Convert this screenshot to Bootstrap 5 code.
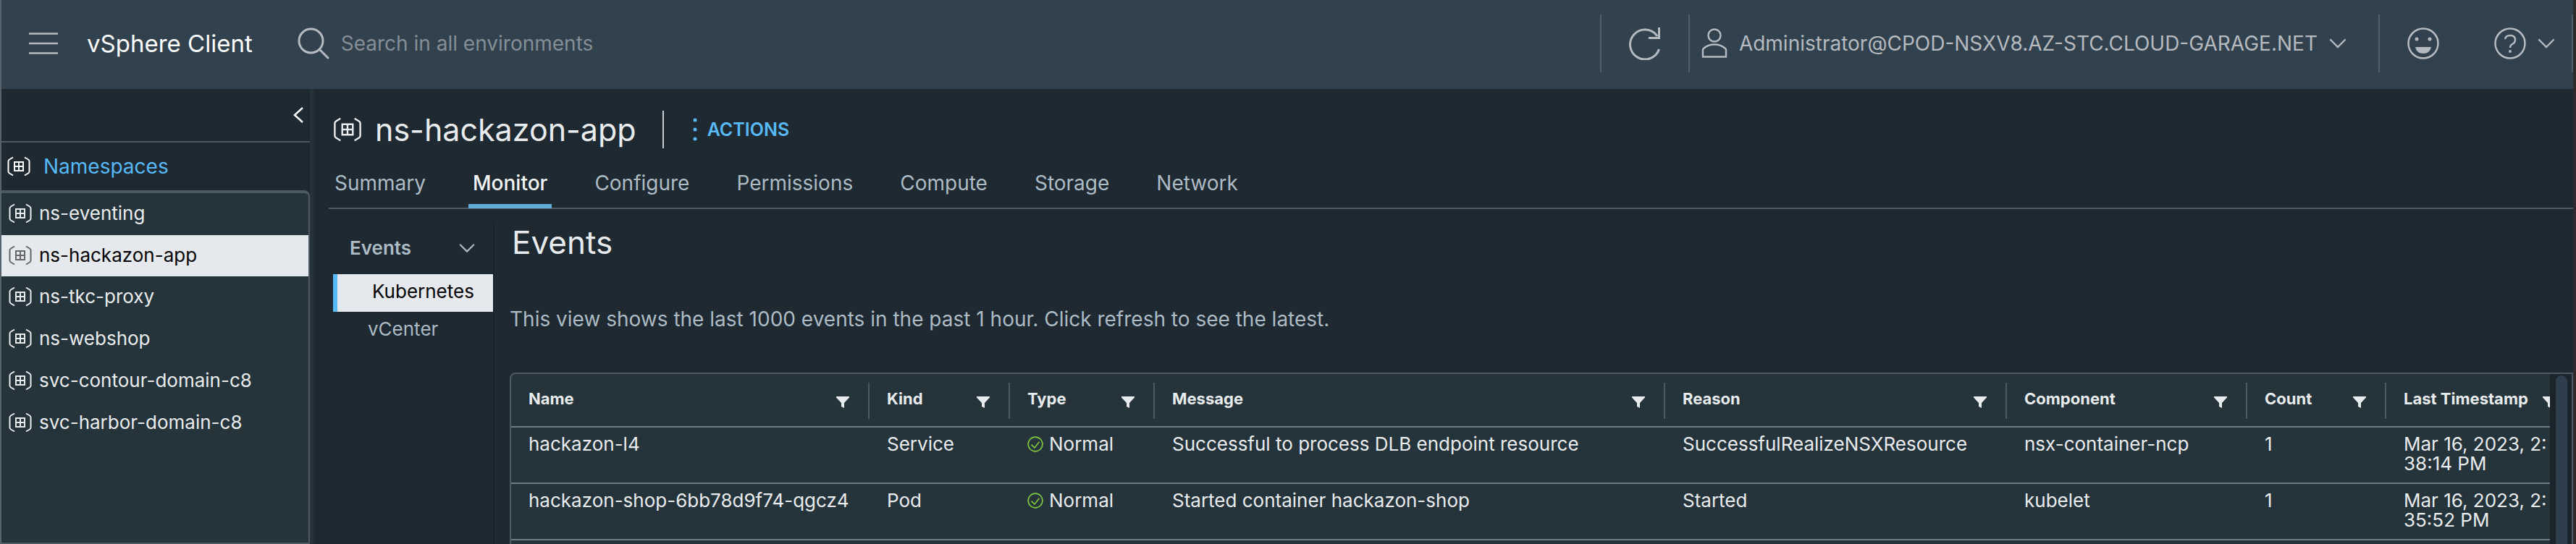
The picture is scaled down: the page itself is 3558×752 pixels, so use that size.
<!DOCTYPE html>
<html lang="en">
<head>
<meta charset="utf-8">
<meta name="viewport" content="width=device-width, initial-scale=1">
<title>vSphere Client</title>
<link href="https://cdn.jsdelivr.net/npm/bootstrap@5.3.0/dist/css/bootstrap.min.css" rel="stylesheet">
<style>
  :root { --line: #4d5965; --ink: #e9ecef; --soft: #adbbc4; --blue: #57b9f8; --panel: #25333a; --page: #1e2931; }
  body { font-family: Inter, "Liberation Sans", sans-serif; font-size: 26px; line-height: 32px; background: var(--page); color: var(--ink); }
  .shell { border-left: 2px solid #56626c; border-right: 4px solid #2f2c2e; min-height: 100vh; overflow: hidden; }
  svg { flex: none; display: block; }
  .ico { fill: none; stroke: currentColor; stroke-width: 2; }
  a { color: inherit; text-decoration: none; }
  button { background: none; border: 0; padding: 0; color: inherit; }

  .topbar { height: 123px; background: #32414e; color: #b4babf; font-size: 28px; padding: 0 0 3px 38px; flex: none; }
  .product { font-size: 33px; color: #fff; margin: 0 62px 0 40px; }
  .search-box { background: none; border: 0; padding: 0; color: inherit; width: 600px; outline: 0; }
  .search-box::placeholder { color: #848e96; opacity: 1; }
  .bar-item { height: 80px; border-left: 2px solid #4f5e6a; }
  .refresh { padding: 0 38px; }
  .user { padding-right: 44px; }
  .help { padding: 0 23px 0 38px; border-right: 2px solid #4f5e6a; }
  .help-btn { margin-left: 76px; }

  .sidebar { width: 432px; border-right: 6px solid #25323a; }
  .collapse-row { height: 74px; padding-right: 8px; border-bottom: 2px solid var(--line); }
  .root-node { height: 66px; padding-left: 8px; gap: 18px; color: var(--blue); font-size: 28px; }
  .root-node svg { color: #fff; }
  .tree { background: var(--panel); border: 2px solid var(--line); border-top-width: 4px; border-left: 0; border-radius: 0 8px 0 0; }
  .tree-node { height: 58px; padding: 0 0 2px 10px; gap: 10px; }
  .tree-node.selected { height: 57px; background: #e5e9ed; color: #000; }
  .tree-node.selected svg { color: #666; }

  .workspace { min-width: 0; }
  .title-row { padding: 30px 0 0 26px; height: 82px; }
  .object-title { font-size: 43px; line-height: 50px; padding-left: 18px; }
  .title-rule { width: 2px; height: 52px; background: #c8cdd1; margin: 0 40px 0 36px; }
  .actions { color: var(--blue); font-size: 25px; font-weight: 600; gap: 14px; }
  .tabs { font-size: 28px; border-bottom: 2px solid var(--line); margin: 18px 0 0 20px; gap: 53px; padding-left: 2px; }
  .tabs a { color: var(--soft); padding: 14px 6px 13px; border-bottom: 6px solid transparent; margin-bottom: -1px; }
  .tabs a.current { color: #f2f4f5; border-color: #62aad8; font-weight: 500; }

  .content-row { padding: 18px 0 0 26px; }
  .subnav { width: 223px; border-right: 2px solid #19232a; }
  .subnav-head { font-weight: 600; color: var(--soft); height: 72px; padding: 0 25px 0 23px; }
  .subnav a { display: block; color: var(--soft); padding: 8px 0 12px 48px; height: 52px; }
  .subnav a.current { background: #e5e9ed; color: #000; border-left: 6px solid var(--blue); }

  .view { padding-left: 21px; min-width: 0; }
  .view-title { font-size: 44px; line-height: 50px; padding: 3px 0 0 3px; }
  .view-note { font-size: 28px; color: var(--soft); padding: 65px 0 58px; }
  .datagrid { background: var(--panel); border: 2px solid var(--line); border-bottom: 0; border-radius: 8px 0 0 0; height: 237px; }
  .grid-clip { overflow: hidden; min-width: 0; }
  .grid-table { width: calc(100% + 34px); table-layout: fixed; border-collapse: separate; border-spacing: 0; line-height: 27px; }
  .grid-table th { padding: 12px 0 10px; border-bottom: 2px solid #6c7b84; font-size: 22px; font-weight: 700; }
  .head-cell { height: 50px; border-right: 2px solid #4b5862; padding: 0 26px 6px 24px; }
  th:last-child .head-cell { border-right: 0; }
  .head-cell button { padding-top: 10px; }
  .grid-table td { height: 78px; padding: 9px 0 0 24px; border-bottom: 2px solid #6c7b84; vertical-align: top; white-space: nowrap; }
  .ok { color: #7fc53f; }
  .gutter { width: 30px; background: #1b242b; padding: 2px 6px 0 8px; }
  .thumb { background: #2e3e4d; border-radius: 8px 8px 0 0; height: 100%; width: 16px; }
</style>
<script src="https://cdn.jsdelivr.net/npm/bootstrap@5.3.0/dist/js/bootstrap.bundle.min.js"></script>
</head>
<body>
<svg width="0" height="0" class="position-absolute" aria-hidden="true">
  <symbol id="ns" viewBox="0 0 32 28">
    <path d="M8 1.500 3 4.500Q1.500 5.500 1.500 7v14q0 1.500 1.500 2.500l5 3M24 1.500l5 3q1.500 1 1.500 2.500v14q0 1.500-1.500 2.500l-5 3M10 8h12v12H10zM16 8v12M10 14h12" fill="none" stroke="currentColor" stroke-width="2"/>
  </symbol>
  <symbol id="down" viewBox="0 0 24 14"><path d="M2 2l10 10L22 2" fill="none" stroke="currentColor" stroke-width="2.400" stroke-linecap="round"/></symbol>
  <symbol id="filter" viewBox="0 0 18 16"><path d="M0 0h18v1.500L11 9v7l-4-2V9L0 1.500z" fill="currentColor"/></symbol>
  <symbol id="check" viewBox="0 0 20 20"><path d="M1 10a9 9 0 1 0 18 0a9 9 0 1 0-18 0M5 10.500l4 4 6-7.500" fill="none" stroke="currentColor" stroke-width="1.500"/></symbol>
</svg>

<div class="shell d-flex flex-column">
  <header class="topbar d-flex align-items-center">
    <button type="button" aria-label="Menu"><svg class="ico" width="40" height="30"><path d="M0 1.500h40M0 15h40M0 28.500h40" stroke-width="2.500"/></svg></button>
    <a href="#" class="product text-nowrap">vSphere Client</a>
    <label for="search" class="me-3" aria-label="Search"><svg class="ico" width="44" height="44" stroke-linecap="round"><circle cx="18.500" cy="18.500" r="16.500" stroke-width="3"/><path d="M31 31l11 11" stroke-width="3"/></svg></label>
    <input id="search" class="search-box" type="text" placeholder="Search in all environments">
    <div class="d-flex align-items-center ms-auto">
      <div class="bar-item refresh d-flex align-items-center"><button type="button" aria-label="Refresh"><svg class="ico" width="44" height="46"><path d="M41.500 31A20.500 20.500 0 1 1 39 13" stroke-width="3"/><path d="M41.500 1v14.500H27" stroke-width="3"/></svg></button></div>
      <div class="bar-item user d-flex align-items-center">
        <button type="button" class="d-flex align-items-center text-nowrap">
          <svg class="ico mx-3" width="36" height="42"><circle cx="18" cy="10" r="8.500" stroke-width="2.500"/><path d="M2 39.500V30q0-1 1-2 6-5.500 15-5.500T33 28q1 1 1 2v9.500z" stroke-width="2.500"/></svg>
          Administrator@CPOD-NSXV8.AZ-STC.CLOUD-GARAGE.NET
          <svg class="ms-3" width="24" height="14"><use href="#down"/></svg>
        </button>
      </div>
      <div class="bar-item help d-flex align-items-center">
        <button type="button" aria-label="Feedback"><svg class="ico" width="44" height="44"><circle cx="22" cy="22" r="20.500" stroke-width="2.500"/><circle cx="13" cy="16" r="2.500" fill="currentColor" stroke="none"/><circle cx="31" cy="16" r="2.500" fill="currentColor" stroke="none"/><path d="M11 27h22q-2 9-11 9t-11-9z" fill="currentColor" stroke="none"/></svg></button>
        <button type="button" class="help-btn d-flex align-items-center" aria-label="Help"><svg class="ico" width="44" height="44"><circle cx="22" cy="22" r="20.500" stroke-width="2.500"/><path d="M15 16q1-5 7-5 7 0 7 6 0 4-4 6-3 1.500-3 5" stroke-width="2.500"/><circle cx="22" cy="33" r="2" fill="currentColor" stroke="none"/></svg><svg class="ms-3" width="24" height="14"><use href="#down"/></svg></button>
      </div>
    </div>
  </header>

  <div class="d-flex flex-grow-1">
    <aside class="sidebar flex-shrink-0 d-flex flex-column">
      <div class="collapse-row d-flex justify-content-end align-items-center"><button type="button" aria-label="Collapse"><svg class="ico" width="16" height="24"><path d="M14 2L3 12l11 10" stroke="#fff" stroke-width="2.500"/></svg></button></div>
      <a href="#" class="root-node d-flex align-items-center"><svg width="32" height="28"><use href="#ns"/></svg>Namespaces</a>
      <nav class="tree flex-grow-1">
        <a href="#" class="tree-node d-flex align-items-center"><svg width="32" height="28"><use href="#ns"/></svg>ns-eventing</a>
        <a href="#" class="tree-node selected d-flex align-items-center"><svg width="32" height="28"><use href="#ns"/></svg>ns-hackazon-app</a>
        <a href="#" class="tree-node d-flex align-items-center"><svg width="32" height="28"><use href="#ns"/></svg>ns-tkc-proxy</a>
        <a href="#" class="tree-node d-flex align-items-center"><svg width="32" height="28"><use href="#ns"/></svg>ns-webshop</a>
        <a href="#" class="tree-node d-flex align-items-center"><svg width="32" height="28"><use href="#ns"/></svg>svc-contour-domain-c8</a>
        <a href="#" class="tree-node d-flex align-items-center"><svg width="32" height="28"><use href="#ns"/></svg>svc-harbor-domain-c8</a>
      </nav>
    </aside>

    <main class="workspace flex-grow-1 d-flex flex-column">
      <div class="title-row d-flex align-items-center">
        <svg width="40" height="34"><use href="#ns"/></svg>
        <h1 class="object-title fw-normal m-0">ns-hackazon-app</h1>
        <span class="title-rule"></span>
        <button type="button" class="actions d-flex align-items-center"><svg width="6" height="32" fill="currentColor"><circle cx="3" cy="3" r="2.500"/><circle cx="3" cy="16" r="2.500"/><circle cx="3" cy="29" r="2.500"/></svg>ACTIONS</button>
      </div>
      <nav class="tabs d-flex">
        <a href="#">Summary</a><a href="#" class="current">Monitor</a><a href="#">Configure</a><a href="#">Permissions</a><a href="#">Compute</a><a href="#">Storage</a><a href="#">Network</a>
      </nav>
      <div class="content-row d-flex flex-grow-1">
        <nav class="subnav flex-shrink-0">
          <button type="button" class="subnav-head d-flex w-100 align-items-center justify-content-between">Events<svg width="22" height="14"><use href="#down"/></svg></button>
          <a href="#" class="current">Kubernetes</a>
          <a href="#">vCenter</a>
        </nav>
        <section class="view flex-grow-1">
          <h2 class="view-title fw-normal mb-0">Events</h2>
          <p class="view-note mb-0">This view shows the last 1000 events in the past 1 hour. Click refresh to see the latest.</p>
          <div class="datagrid d-flex">
            <div class="grid-clip flex-grow-1">
              <table class="grid-table">
                <colgroup><col style="width:495px"><col style="width:194px"><col style="width:200px"><col><col style="width:472px"><col style="width:332px"><col style="width:192px"><col style="width:260px"></colgroup>
                <thead><tr>
                  <th><div class="head-cell d-flex align-items-center justify-content-between">Name<button type="button" aria-label="Filter name"><svg width="18" height="16"><use href="#filter"/></svg></button></div></th>
                  <th><div class="head-cell d-flex align-items-center justify-content-between">Kind<button type="button" aria-label="Filter kind"><svg width="18" height="16"><use href="#filter"/></svg></button></div></th>
                  <th><div class="head-cell d-flex align-items-center justify-content-between">Type<button type="button" aria-label="Filter type"><svg width="18" height="16"><use href="#filter"/></svg></button></div></th>
                  <th><div class="head-cell d-flex align-items-center justify-content-between">Message<button type="button" aria-label="Filter message"><svg width="18" height="16"><use href="#filter"/></svg></button></div></th>
                  <th><div class="head-cell d-flex align-items-center justify-content-between">Reason<button type="button" aria-label="Filter reason"><svg width="18" height="16"><use href="#filter"/></svg></button></div></th>
                  <th><div class="head-cell d-flex align-items-center justify-content-between">Component<button type="button" aria-label="Filter component"><svg width="18" height="16"><use href="#filter"/></svg></button></div></th>
                  <th><div class="head-cell d-flex align-items-center justify-content-between">Count<button type="button" aria-label="Filter count"><svg width="18" height="16"><use href="#filter"/></svg></button></div></th>
                  <th><div class="head-cell d-flex align-items-center justify-content-between text-nowrap">Last Timestamp<button type="button" aria-label="Filter last timestamp"><svg width="18" height="16"><use href="#filter"/></svg></button></div></th>
                </tr></thead>
                <tbody>
                  <tr><td>hackazon-l4</td><td>Service</td><td><span class="d-flex align-items-center gap-2"><svg class="ok" width="22" height="22"><use href="#check"/></svg>Normal</span></td><td>Successful to process DLB endpoint resource</td><td>SuccessfulRealizeNSXResource</td><td>nsx-container-ncp</td><td>1</td><td>Mar 16, 2023, 2:<br>38:14 PM</td></tr>
                  <tr><td>hackazon-shop-6bb78d9f74-qgcz4</td><td>Pod</td><td><span class="d-flex align-items-center gap-2"><svg class="ok" width="22" height="22"><use href="#check"/></svg>Normal</span></td><td>Started container hackazon-shop</td><td>Started</td><td>kubelet</td><td>1</td><td>Mar 16, 2023, 2:<br>35:52 PM</td></tr>
                </tbody>
              </table>
            </div>
            <div class="gutter flex-shrink-0"><div class="thumb"></div></div>
          </div>
        </section>
      </div>
    </main>
  </div>
</div>
</body>
</html>
